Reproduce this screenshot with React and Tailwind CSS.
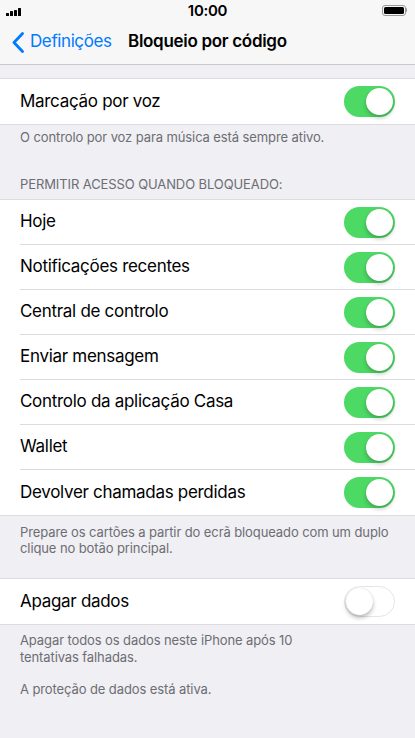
import React from "react";

const font = { fontFamily: "Inter, 'Noto Sans', sans-serif" };

function Toggle({ on }) {
  return on ? (
    <div className="w-[51px] h-[31px] rounded-full bg-[#4cd964] relative shrink-0">
      <div className="absolute right-[2px] top-[2px] w-[27px] h-[27px] rounded-full bg-white shadow-[0_3px_4px_rgba(0,0,0,0.22),0_0_1px_rgba(0,0,0,0.15)]" />
    </div>
  ) : (
    <div className="w-[51px] h-[31px] rounded-full bg-white border-[1.5px] border-[#e5e5ea] relative shrink-0">
      <div className="absolute left-[0.5px] top-[0.5px] w-[27px] h-[27px] rounded-full bg-white shadow-[0_3px_4px_rgba(0,0,0,0.25),0_0_1px_rgba(0,0,0,0.2)]" />
    </div>
  );
}

function Row({ label, on, last }) {
  return (
    <div className="flex items-center h-[45px] pl-5 bg-white">
      <div className={`flex items-center flex-1 h-full pr-5 ${last ? "" : "border-b border-[#dcdce0]"}`}>
        <span className="flex-1 text-[17px] text-black tracking-[-0.3px]">{label}</span>
        <Toggle on={on} />
      </div>
    </div>
  );
}

export default function App() {
  const rows = [
    "Hoje",
    "Notificações recentes",
    "Central de controlo",
    "Enviar mensagem",
    "Controlo da aplicação Casa",
    "Wallet",
    "Devolver chamadas perdidas",
  ];
  return (
    <div className="w-[415px] h-[738px] bg-[#efeff4] overflow-hidden" style={font}>
      <div className="bg-[#f7f7f7] border-b border-[#c8c7cc] h-[65px]">
        <div className="h-[20px] flex items-center justify-between px-[6px] relative">
          <div className="flex items-end gap-[1px] h-[8px] mt-[3px]">
            <div className="w-[3px] h-[3px] bg-black rounded-[0.5px]" />
            <div className="w-[3px] h-[4.5px] bg-black rounded-[0.5px]" />
            <div className="w-[3px] h-[6px] bg-black rounded-[0.5px]" />
            <div className="w-[3px] h-[8px] bg-black rounded-[0.5px]" />
          </div>
          <span className="absolute left-1/2 -translate-x-1/2 top-[0px] text-[15px] font-semibold tracking-[-0.3px] text-black">10:00</span>
          <div className="flex items-center mr-[2px]">
            <div className="w-[24px] h-[11px] rounded-[3px] border border-[#9a9a9a] p-[1px]">
              <div className="w-full h-full bg-black rounded-[1.5px]" />
            </div>
            <div className="w-[1.5px] h-[4px] bg-[#9a9a9a] rounded-r-[1px]" />
          </div>
        </div>
        <div className="h-[44px] flex items-center relative">
          <div className="flex items-center pl-[12px] text-[#007aff]">
            <svg width="13" height="21" viewBox="0 0 13 21" className="mr-[5px]">
              <path d="M10.5 1.5 L2 10.5 L10.5 19.5" fill="none" stroke="#007aff" strokeWidth="2.8" strokeLinecap="round" strokeLinejoin="round" />
            </svg>
            <span className="text-[17px] tracking-[-0.4px]">Definições</span>
          </div>
          <span className="absolute left-[128px] text-[17px] font-semibold tracking-[-0.3px] text-black">Bloqueio por código</span>
        </div>
      </div>

      <div className="h-[13px]" />
      <div className="border-y border-[#dcdce0]">
        <Row label="Marcação por voz" on last />
      </div>
      <div className="px-5 pt-[3px] text-[13px] text-[#6d6d72] leading-[16px] tracking-[-0.1px]">
        <p className="pt-[1px]">O controlo por voz para música está sempre ativo.</p>
        <p className="mt-[31px] uppercase">Permitir acesso quando bloqueado:</p>
      </div>
      <div className="h-[7px]" />
      <div className="border-y border-[#dcdce0]">
        {rows.map((r, i) => (
          <Row key={r} label={r} on last={i === rows.length - 1} />
        ))}
      </div>
      <div className="px-5 pt-[8px] text-[13px] text-[#6d6d72] leading-[16px] tracking-[-0.1px]">
        <p>Prepare os cartões a partir do ecrã bloqueado com um duplo clique no botão principal.</p>
      </div>
      <div className="h-[22px]" />
      <div className="border-y border-[#dcdce0]">
        <Row label="Apagar dados" on={false} last />
      </div>
      <div className="px-5 pt-[7px] text-[13px] text-[#6d6d72] leading-[17px] tracking-[-0.1px]">
        <p>Apagar todos os dados neste iPhone após 10<br />tentativas falhadas.</p>
        <p className="mt-[15px]">A proteção de dados está ativa.</p>
      </div>
    </div>
  );
}
